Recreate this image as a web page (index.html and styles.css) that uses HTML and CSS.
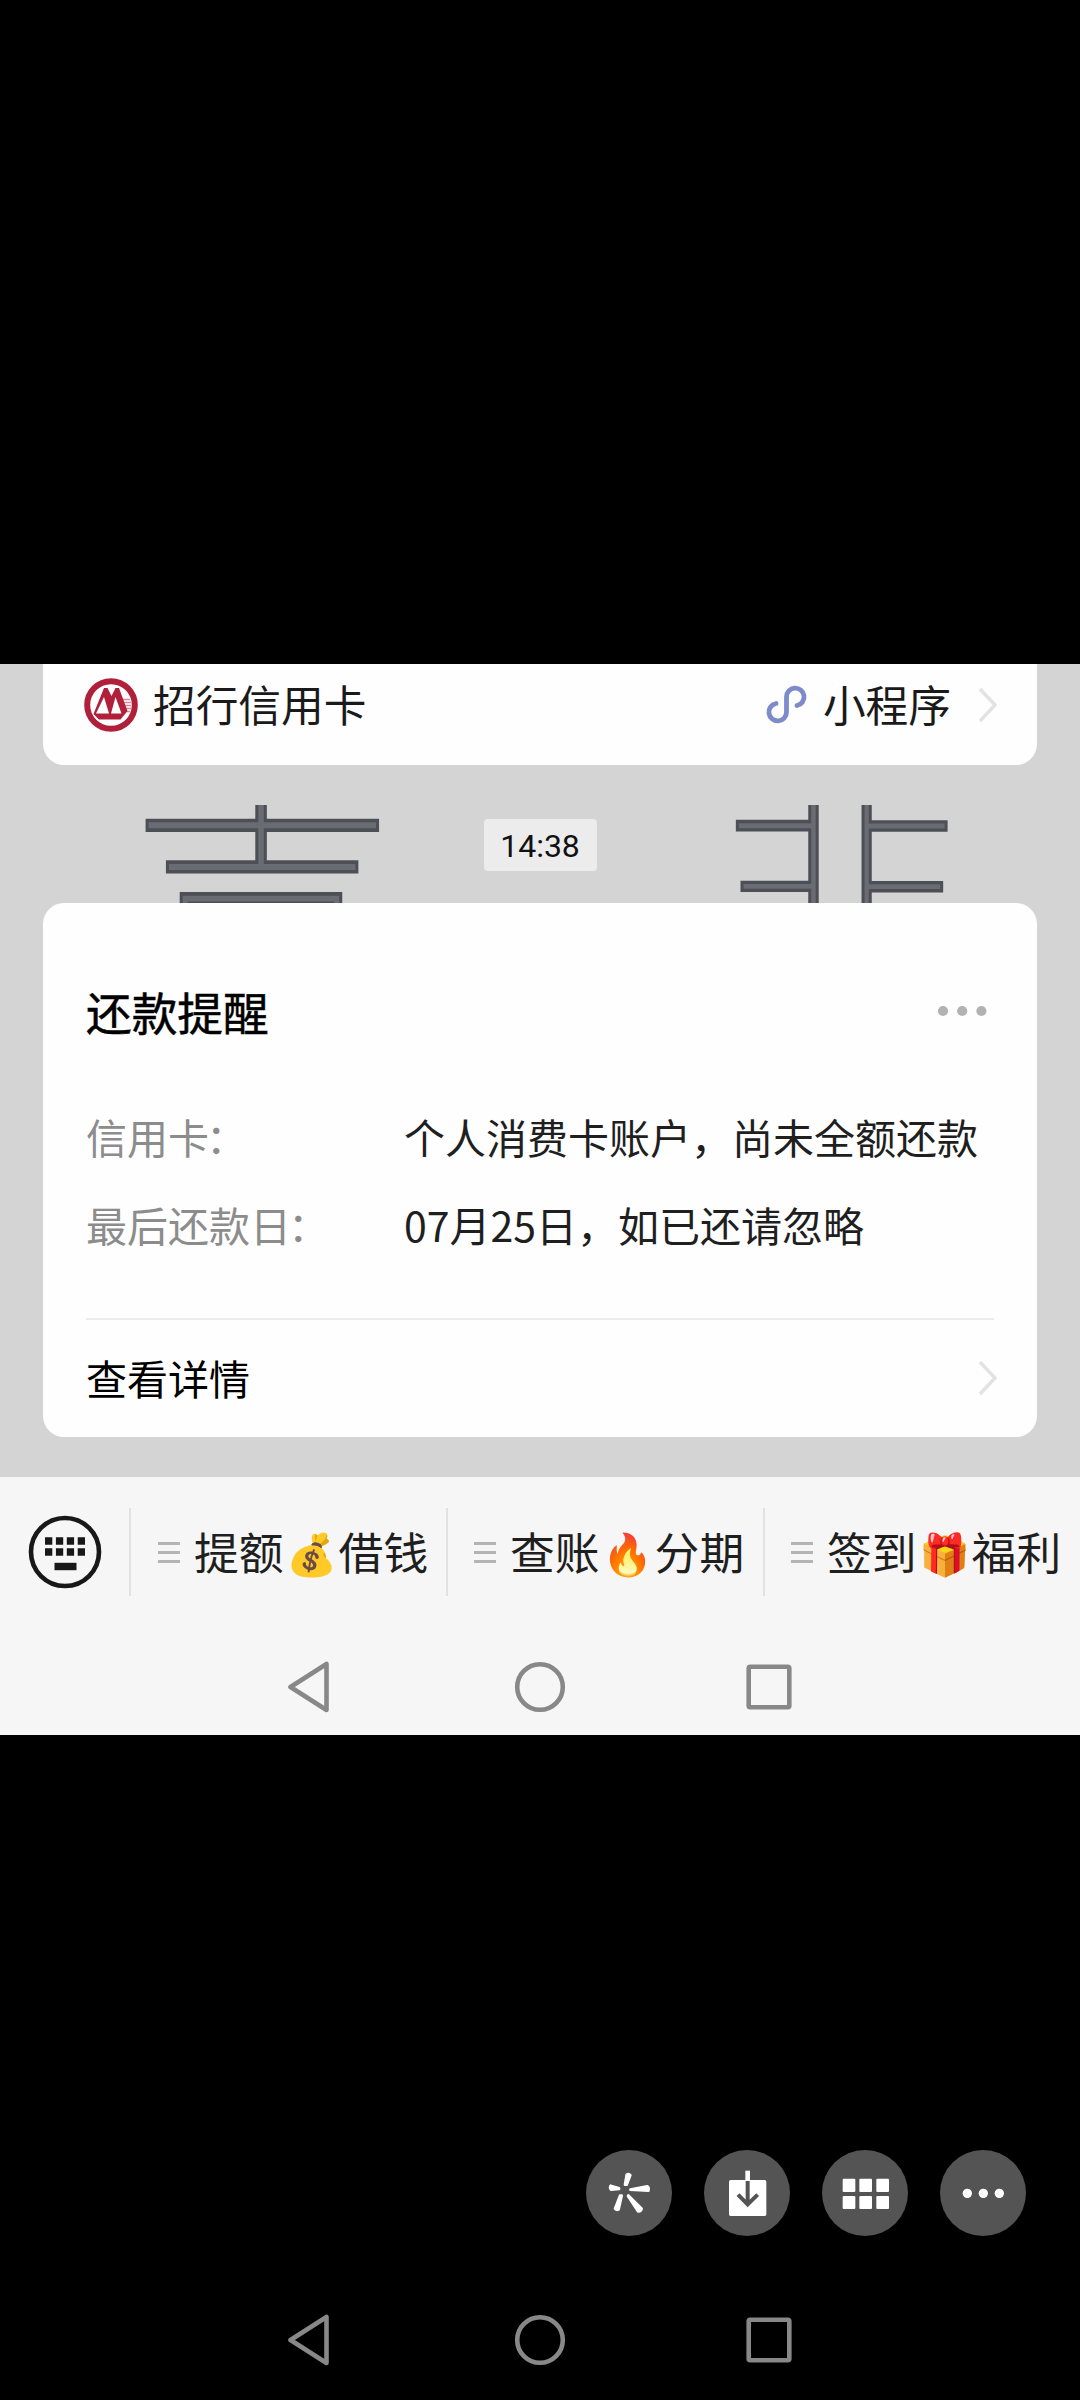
FILE: index.html
```html
<!DOCTYPE html>
<html lang="zh-CN">
<head>
<meta charset="utf-8">
<title>还款提醒</title>
<link rel="stylesheet" href="styles.css">
</head>
<body>
<main class="viewer">
  <section class="chat">
    <div class="wallpaper">
      <span class="backdrop backdrop-left">喜</span>
      <span class="backdrop backdrop-right">非</span>
    </div>
    <div class="card card-mini">
      <svg class="logo" viewBox="0 0 54 54">
        <circle cx="27" cy="27" r="23.800" fill="#fff" stroke="#b0203a" stroke-width="6"/>
        <path d="M39 21.500h7M40 24.500h7M41 27.500h6M42 30.500h5M42 33.500h4" stroke="#d98a96" stroke-width="1.400"/>
        <path d="M9.500 36 20 10h3.500l4 8 4-8H35l8.500 23-7 8.500H15z" fill="#b0203a"/>
        <path d="M12 35.500 20 19 25 35.500zM27 35.500 31.500 19 37.500 35.500z" fill="#fff"/>
      </svg>
      <span class="mini-name">招行信用卡</span>
      <svg class="mini-icon" viewBox="0 0 43 39">
        <path d="M11 18.500A8.800 8.800 0 1 0 21.500 27V12a8.800 8.800 0 1 1 10.500 8.500" fill="none" stroke="#7d8bcb" stroke-width="4.800" stroke-linecap="round"/>
      </svg>
      <span class="mini-type">小程序</span>
      <svg class="chevron" viewBox="0 0 20 36"><path d="M2 2 17 18 2 34" fill="none" stroke="#e2e2e2" stroke-width="3.400"/></svg>
    </div>
    <time class="stamp">14:38</time>
    <article class="card card-notice">
      <header class="notice-head">
        <h1 class="notice-title">还款提醒</h1>
        <svg class="notice-more" viewBox="0 0 50 12" fill="#b2b2b2"><circle cx="6" cy="6" r="5.100"/><circle cx="25.200" cy="6" r="5.100"/><circle cx="44.400" cy="6" r="5.100"/></svg>
      </header>
      <dl class="facts">
        <dt>信用卡<span class="colon">：</span></dt><dd>个人消费卡账户，尚未全额还款</dd>
        <dt>最后还款日<span class="colon">：</span></dt><dd>07月25日，如已还请忽略</dd>
      </dl>
      <footer class="notice-foot">
        <span>查看详情</span>
        <svg class="chevron" viewBox="0 0 20 36"><path d="M2 2 17 18 2 34" fill="none" stroke="#e2e2e2" stroke-width="3.400"/></svg>
      </footer>
    </article>
    <nav class="menu">
      <div class="keyboard">
        <svg class="keyboard-icon" viewBox="0 0 74 74">
          <circle cx="37" cy="37" r="34" fill="none" stroke="#181818" stroke-width="4.600"/>
          <path d="M17 26h40M17 37h40" stroke="#181818" stroke-width="7.400" stroke-dasharray="7.300 3.600"/>
          <path d="M26.500 51.500h22" stroke="#181818" stroke-width="7.400"/>
        </svg>
      </div>
      <div class="menu-item"><i class="bars"></i><span>提额</span><span class="emoji">💰</span><span>借钱</span></div>
      <div class="menu-item"><i class="bars"></i><span>查账</span><span class="emoji">🔥</span><span>分期</span></div>
      <div class="menu-item"><i class="bars"></i><span>签到</span><span class="emoji">🎁</span><span>福利</span></div>
    </nav>
    <div class="sysnav">
      <svg viewBox="0 0 44 52"><path d="M3.500 26 39.500 3v46z"/></svg>
      <svg viewBox="0 0 52 52"><circle cx="26" cy="26" r="22.800"/></svg>
      <svg viewBox="0 0 46 46"><rect x="2.700" y="2.700" width="40.600" height="40.600" rx="1.500"/></svg>
    </div>
  </section>
  <div class="tools">
    <svg class="tool" viewBox="0 0 258 258">
      <circle cx="129" cy="129" r="129" fill="#545454"/>
      <g fill="#fff" stroke="#fff" stroke-width="8" stroke-linejoin="round">
        <path d="M117 104 122 74Q129 70 133 76L122 104z"/>
        <path d="M133 119 184 109Q190 114 187 122L133 119z"/>
        <path d="M127 136 167 176Q164 186 156 184L126 138z"/>
        <path d="M107 137 98 178Q92 182 87 176L102 137z"/>
        <path d="M99 115 74 107Q70 113 75 119L99 117z"/>
      </g>
    </svg>
    <svg class="tool" viewBox="0 0 258 258">
      <circle cx="129" cy="129" r="129" fill="#545454"/>
      <rect x="75" y="90" width="112" height="108" rx="5" fill="#fff"/>
      <path d="M131 62v30" stroke="#fff" stroke-width="14"/>
      <path d="M131 93v70M102 134l29 29 30-29" fill="none" stroke="#545454" stroke-width="12"/>
    </svg>
    <svg class="tool" viewBox="0 0 258 258">
      <circle cx="129" cy="129" r="129" fill="#545454"/>
      <g fill="#fff"><rect x="62" y="86" width="38" height="40" rx="3"/><rect x="112" y="86" width="38" height="40" rx="3"/><rect x="163" y="86" width="38" height="40" rx="3"/><rect x="62" y="138" width="38" height="39" rx="3"/><rect x="112" y="138" width="38" height="39" rx="3"/><rect x="163" y="138" width="38" height="39" rx="3"/></g>
    </svg>
    <svg class="tool" viewBox="0 0 258 258">
      <circle cx="129" cy="129" r="129" fill="#545454"/>
      <g fill="#fff"><circle cx="82" cy="130" r="14"/><circle cx="130" cy="130" r="14"/><circle cx="178" cy="130" r="14"/></g>
    </svg>
  </div>
  <div class="sysnav sysnav-device">
    <svg viewBox="0 0 44 52"><path d="M3.500 26 39.500 3v46z"/></svg>
    <svg viewBox="0 0 52 52"><circle cx="26" cy="26" r="22.800"/></svg>
    <svg viewBox="0 0 46 46"><rect x="2.700" y="2.700" width="40.600" height="40.600" rx="1.500"/></svg>
  </div>
</main>
</body>
</html>
```
FILE: styles.css
```css
* { box-sizing: border-box; }
body { margin: 0; background: #000; }
svg { display: block; flex: none; }

.viewer {
  display: flex;
  flex-direction: column;
  width: 1080px;
  height: 2400px;
  padding-top: 664px;
  background: #000;
  font-family: "Noto Sans CJK SC", sans-serif;
  overflow: hidden;
}

.chat {
  position: relative;
  display: flex;
  flex-direction: column;
  height: 1071px;
  background: #d4d4d4;
  overflow: hidden;
}

/* Large characters of the chat wallpaper, visible only between the cards */
.wallpaper {
  position: absolute;
  inset: 141px 0 auto;
  height: 98px;
  overflow: hidden;
}
.backdrop {
  position: absolute;
  line-height: 1;
  font-weight: 100;
  color: #696c72;
  -webkit-text-stroke: 3px #4c4f55;
  transform-origin: 0 0;
}
.backdrop-left { left: 124px; top: -46px; font-size: 275px; transform: scaleY(1.2); }
.backdrop-right { left: 715px; top: -60px; font-size: 248px; transform: scaleY(1.12); }

.card {
  position: relative;
  margin: 0 43px;
  background: #fefefe;
}

.card-mini {
  display: flex;
  align-items: center;
  height: 101px;
  padding: 0 39px 20px 41px;
  border-radius: 0 0 21px 21px;
  font-size: 42.700px;
  line-height: 60px;
  color: #1a1a1a;
}
.card-mini span { margin-top: -3px; }
.logo { width: 54px; height: 54px; }
.card-mini .mini-name { margin-left: 15px; margin-right: auto; }
.mini-icon { width: 43px; height: 39px; }
.card-mini .mini-type { margin-left: 15px; margin-right: 27px; }
.chevron { width: 20px; height: 36px; }

.stamp {
  position: relative;
  align-self: center;
  width: 113px;
  margin: 54px 0 32px;
  border-radius: 4px;
  background: #ececec;
  font: 32px/54px Roboto, sans-serif;
  height: 52px;
  text-align: center;
  color: #111;
}

.card-notice {
  height: 534px;
  padding: 0 43px;
  border-radius: 21px;
}
.notice-head {
  display: flex;
  justify-content: space-between;
  align-items: center;
  padding: 78px 7px 0 0;
}
.notice-title {
  margin: 0;
  font-size: 45.700px;
  line-height: 60px;
  font-weight: 400;
  -webkit-text-stroke: 0.500px #000;
  color: #000;
}
.notice-more { width: 50px; height: 12px; }

.facts {
  display: grid;
  grid-template-columns: 318px 1fr;
  row-gap: 28px;
  margin: 65px 0 64px;
  font-size: 41px;
  line-height: 60px;
  white-space: nowrap;
}
.facts dt { color: #8c8c8c; }
.facts dd { margin: 0; color: #1f1f1f; }
.colon { margin-left: -3px; }

.notice-foot {
  display: flex;
  justify-content: space-between;
  align-items: center;
  height: 121px;
  padding-bottom: 5px;
  border-top: 2px solid #ececec;
  font-size: 41px;
  color: #000;
}
.notice-foot .chevron { margin: 2px -4px 0 0; }

.menu {
  position: relative;
  display: flex;
  align-items: center;
  height: 150px;
  margin-top: 40px;
  background: #f6f6f6;
}
.keyboard { flex: none; width: 129px; padding-left: 28px; }
.keyboard-icon { width: 74px; height: 74px; }
.menu-item {
  display: flex;
  align-items: center;
  flex: none;
  width: 317px;
  height: 88px;
  padding-left: 26px;
  border-left: 2px solid #e2e2e2;
  font-size: 44.800px;
  line-height: 60px;
  color: #1f1f1f;
  white-space: nowrap;
}
.keyboard + .menu-item { padding-left: 27px; }
.menu-item span { margin-top: -2px; }
.bars {
  width: 22px;
  height: 21px;
  margin-right: 14px;
  background: repeating-linear-gradient(#b4b4b4 0 3px, transparent 3px 9px);
}
.emoji { display: flex; justify-content: center; width: 55px; font-size: 41px; }

.sysnav {
  position: relative;
  display: flex;
  align-items: center;
  justify-content: space-between;
  flex: 1;
  padding: 11px 288px 0 287px;
  background: #f6f6f6;
}
.sysnav svg { fill: none; stroke: #888; stroke-width: 4.600; stroke-linejoin: round; }
.sysnav svg:nth-child(1) { width: 44px; }
.sysnav svg:nth-child(2) { width: 52px; margin-left: 3px; }
.sysnav svg:nth-child(3) { width: 46px; }

.tools {
  display: flex;
  justify-content: flex-end;
  gap: 32px;
  margin: 415px 54px 0 0;
}
.tool { width: 86px; height: 86px; }
.sysnav-device { background: #000; padding-top: 44px; }
```
